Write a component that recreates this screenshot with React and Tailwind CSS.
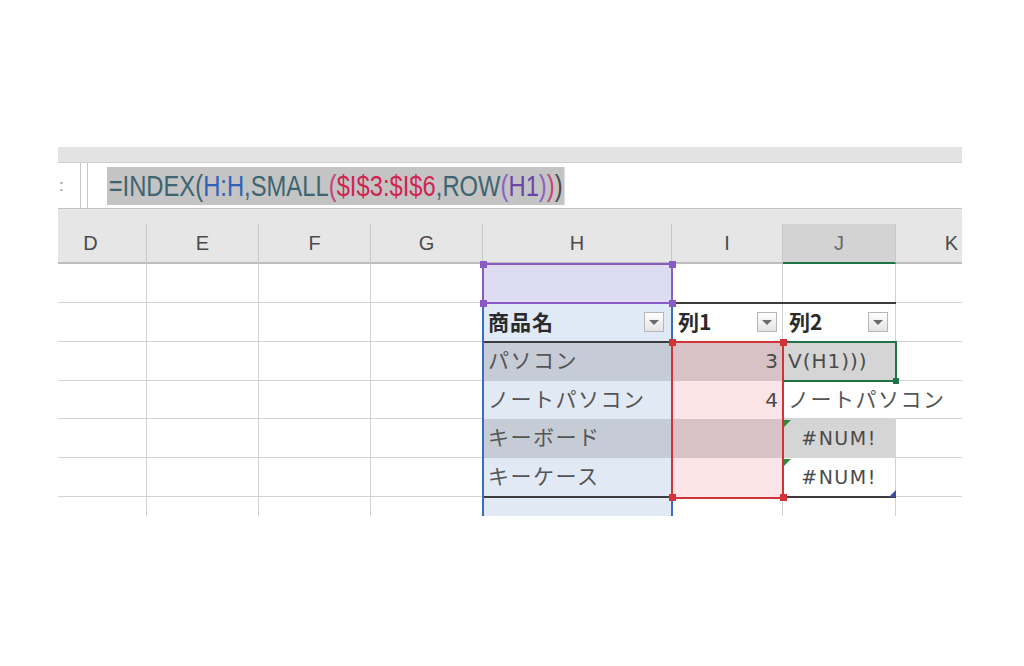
import React from 'react';

const JP = "font-['Noto_Sans_CJK_JP','Noto_Sans_CJK_SC',sans-serif]";
const LAT = "font-['DejaVu_Sans','Liberation_Sans',sans-serif]";

const ROW_H = ['h-[39px]', 'h-[39px]', 'h-[39px]', 'h-[38px]', 'h-[39px]', 'h-[39px]', 'h-[19px]'];

const HEADERS = [
  { label: 'D', w: 'w-[112px]', cls: 'bg-[#e6e6e6] border-b-[#bdbdbd] text-[#4a4a4a]' },
  { label: 'E', w: 'w-[112px]', cls: 'bg-[#e6e6e6] border-b-[#bdbdbd] text-[#4a4a4a]' },
  { label: 'F', w: 'w-[112px]', cls: 'bg-[#e6e6e6] border-b-[#bdbdbd] text-[#4a4a4a]' },
  { label: 'G', w: 'w-[112px]', cls: 'bg-[#e6e6e6] border-b-[#bdbdbd] text-[#4a4a4a]' },
  { label: 'H', w: 'w-[189px]', cls: 'bg-[#e6e6e6] border-b-[#bdbdbd] text-[#4a4a4a]' },
  { label: 'I', w: 'w-[111px]', cls: 'bg-[#e6e6e6] border-b-[#bdbdbd] text-[#4a4a4a]' },
  { label: 'J', w: 'w-[113px]', cls: 'bg-[#d3d3d3] border-b-[#217346] text-[#6a6a6a]' },
  { label: 'K', w: 'w-[112px]', cls: 'bg-[#e6e6e6] border-b-[#bdbdbd] text-[#4a4a4a]' },
];

// H column: label, background
const H_CELLS = [
  { text: '', bg: 'bg-[#dedcf3]' },
  { text: '商品名', bg: 'bg-[#e0e9f6]', bold: true },
  { text: 'パソコン', bg: 'bg-[#c6ccd5]' },
  { text: 'ノートパソコン', bg: 'bg-[#e1e9f5]' },
  { text: 'キーボード', bg: 'bg-[#c6ccd5]' },
  { text: 'キーケース', bg: 'bg-[#e1e9f5]' },
  { text: '', bg: 'bg-[#e1e9f5]' },
];

const I_CELLS = [
  { text: '', bg: '' },
  { text: '列1', bg: 'bg-white', bold: true },
  { text: '3', bg: 'bg-[#d9c2c5]' },
  { text: '4', bg: 'bg-[#fce4e7]' },
  { text: '', bg: 'bg-[#d9c2c5]' },
  { text: '', bg: 'bg-[#fce4e7]' },
  { text: '', bg: '' },
];

function Grid({ w, h, last, className = '', children }) {
  return (
    <div
      className={`${w} ${h} shrink-0 border-r ${last ? 'border-b-0' : 'border-b'} ${className}`}
    >
      {children}
    </div>
  );
}

function FilterButton() {
  return (
    <div className="w-[20px] h-[20px] shrink-0 border border-[#b7b7b7] bg-gradient-to-b from-white to-[#e4e4e4] flex items-center justify-center">
      <div className="w-0 h-0 border-l-[5px] border-r-[5px] border-t-[5px] border-l-transparent border-r-transparent border-t-[#6b6b6b]" />
    </div>
  );
}

function Handle({ pos, color }) {
  return <div className={`absolute w-[7px] h-[7px] ${pos} ${color}`} />;
}

function Formula() {
  return (
    <span className="bg-[#c4c4c4] h-[38px] px-[2px] flex items-center text-[29px] leading-[38px] font-['Liberation_Sans',sans-serif] whitespace-nowrap scale-x-[0.82] origin-left">
      <span className="text-[#3d6470]">=INDEX(</span>
      <span className="text-[#2f62b8]">H:H</span>
      <span className="text-[#3d6470]">,SMALL</span>
      <span className="text-[#c4437a]">(</span>
      <span className="text-[#cf2552]">$I$3:$I$6</span>
      <span className="text-[#3d6470]">,ROW</span>
      <span className="text-[#8a62c0]">(</span>
      <span className="text-[#6c45a8]">H1</span>
      <span className="text-[#8a62c0]">)</span>
      <span className="text-[#c4437a]">)</span>
      <span className="text-[#4a4a4a]">)</span>
    </span>
  );
}

function HCell({ r }) {
  const c = H_CELLS[r];
  const last = r === ROW_H.length - 1;
  return (
    <Grid
      w="w-[189px]"
      h={ROW_H[r]}
      last={last}
      className={`${c.bg} border-transparent flex items-center pl-[5px] pr-[7px] ${JP} text-[21px] tracking-[1.5px] text-[#555555]`}
    >
      <span className={c.bold ? 'font-bold text-[#2a2a2a] tracking-[1px]' : 'pb-[2px]'}>{c.text}</span>
      {c.bold && (
        <div className="ml-auto">
          <FilterButton />
        </div>
      )}
    </Grid>
  );
}

function ICell({ r }) {
  const c = I_CELLS[r];
  const last = r === ROW_H.length - 1;
  const filled = c.bg && c.bg !== 'bg-white';
  if (r === 1) {
    return (
      <Grid w="w-[111px]" h={ROW_H[r]} className={`bg-white border-[#d2d2d2] flex items-center pl-[6px] pr-[5px] ${JP} text-[21px] text-[#2a2a2a]`}>
        <span className="font-bold">{c.text}</span>
        <div className="ml-auto">
          <FilterButton />
        </div>
      </Grid>
    );
  }
  return (
    <Grid
      w="w-[111px]"
      h={ROW_H[r]}
      last={last}
      className={`${c.bg} ${filled ? 'border-transparent' : 'border-[#d2d2d2]'} flex items-center justify-end pr-[4px] ${LAT} text-[20px] text-[#4a4a4a]`}
    >
      {c.text}
    </Grid>
  );
}

function JCell({ r }) {
  const last = r === ROW_H.length - 1;
  const h = ROW_H[r];
  if (r === 1) {
    return (
      <Grid w="w-[113px]" h={h} className={`bg-white border-[#d2d2d2] flex items-center pl-[6px] pr-[7px] ${JP} text-[21px] text-[#2a2a2a]`}>
        <span className="font-bold">列2</span>
        <div className="ml-auto">
          <FilterButton />
        </div>
      </Grid>
    );
  }
  if (r === 2) {
    return (
      <Grid w="w-[113px]" h={h} className={`bg-[#d5d5d5] border-transparent flex items-center pl-[5px] ${LAT} text-[20px] tracking-[1px] text-[#4a4a4a] whitespace-nowrap`}>
        V(H1)))
      </Grid>
    );
  }
  if (r === 3) {
    return (
      <Grid w="w-[113px]" h={h} className={`border-b-[#d2d2d2] border-r-transparent flex items-center pl-[5px] ${JP} text-[21px] tracking-[1.5px] text-[#555555] whitespace-nowrap overflow-visible`}>
        <span className="pb-[2px]">ノートパソコン</span>
      </Grid>
    );
  }
  if (r === 4 || r === 5) {
    return (
      <Grid
        w="w-[113px]"
        h={h}
        className={`${r === 4 ? 'bg-[#d5d5d5] border-transparent' : 'bg-white border-[#d2d2d2]'} flex items-center justify-center ${LAT} text-[19px] tracking-[1.5px] text-[#4a4a4a]`}
      >
        #NUM!
      </Grid>
    );
  }
  return <Grid w="w-[113px]" h={h} last={last} className="border-[#d2d2d2]" />;
}

function Row({ r }) {
  const last = r === ROW_H.length - 1;
  const h = ROW_H[r];
  return (
    <div className="flex">
      <Grid w="w-[112px]" h={h} last={last} className="bg-white border-[#d2d2d2]" />
      <Grid w="w-[112px]" h={h} last={last} className="bg-white border-[#d2d2d2]" />
      <Grid w="w-[112px]" h={h} last={last} className="bg-white border-[#d2d2d2]" />
      <Grid w="w-[112px]" h={h} last={last} className="bg-white border-[#d2d2d2]" />
      <HCell r={r} />
      <ICell r={r} />
      <JCell r={r} />
      <Grid w="w-[112px]" h={h} last={last} className="border-[#d2d2d2]" />
    </div>
  );
}

export default function App() {
  return (
    <div className="w-[1024px] h-[666px] bg-white overflow-hidden pt-[147px] pl-[58px]">
      <div className="w-[904px] overflow-hidden">
        {/* ribbon edge */}
        <div className="h-[16px] bg-[#e3e3e3] border-b border-[#cfcfcf]" />

        {/* formula bar */}
        <div className="flex h-[46px] bg-white border-b border-[#c3c3c3]">
          <div className="w-[23px] border-r border-[#c8c8c8] flex items-center pl-[1px] text-[17px] text-[#8c8c8c] font-['Liberation_Sans',sans-serif]">
            :
          </div>
          <div className="w-[6px]" />
          <div className="flex-1 border-l border-[#c8c8c8] flex items-center pl-[19px]">
            <Formula />
          </div>
        </div>

        {/* column headers */}
        <div className="h-[55px] bg-[#e6e6e6] flex items-end">
          <div className="flex ml-[-23px]">
            {HEADERS.map((c) => (
              <div
                key={c.label}
                className={`${c.w} ${c.cls} h-[40px] shrink-0 border-r border-r-[#c8c8c8] border-b-2 flex items-center justify-center text-[20px] font-['Liberation_Sans',sans-serif]`}
              >
                {c.label}
              </div>
            ))}
          </div>
        </div>

        {/* cells */}
        <div className="relative ml-[-23px]">
          {ROW_H.map((_, r) => (
            <Row key={r} r={r} />
          ))}

          {/* table borders */}
          <div className="absolute left-[638px] top-[38px] w-[223px] h-[2px] bg-[#3c3c3c]" />
          <div className="absolute left-[449px] top-[77px] w-[187px] h-[2px] bg-[#3c3c3c]" />
          <div className="absolute left-[449px] top-[232px] w-[187px] h-[2px] bg-[#3c3c3c]" />
          <div className="absolute left-[749px] top-[232px] w-[112px] h-[2px] bg-[#3c3c3c]" />

          {/* blue reference H:H */}
          <div className="absolute left-[447px] top-[39px] w-[2px] h-[215px] bg-[#3b6cc3]" />
          <div className="absolute left-[636px] top-[39px] w-[2px] h-[215px] bg-[#3b6cc3]" />

          {/* purple reference H1 */}
          <div className="absolute left-[447px] top-[-1px] w-[191px] h-[41px] border-2 border-[#8a5ac6]" />
          <Handle pos="left-[445px] top-[-3px]" color="bg-[#8a5ac6]" />
          <Handle pos="left-[634px] top-[-3px]" color="bg-[#8a5ac6]" />
          <Handle pos="left-[445px] top-[36px]" color="bg-[#8a5ac6]" />
          <Handle pos="left-[634px] top-[36px]" color="bg-[#8a5ac6]" />

          {/* active cell J3 */}
          <div className="absolute left-[747px] top-[77px] w-[115px] h-[41px] border-2 border-[#217346]" />
          <div className="absolute left-[858px] top-[114px] w-[6px] h-[6px] bg-[#217346]" />

          {/* red reference I3:I6 */}
          <div className="absolute left-[636px] top-[77px] w-[113px] h-[158px] border-2 border-[#d13438]" />
          <Handle pos="left-[634px] top-[75px]" color="bg-[#d13438]" />
          <Handle pos="left-[745px] top-[75px]" color="bg-[#d13438]" />
          <Handle pos="left-[634px] top-[230px]" color="bg-[#d13438]" />
          <Handle pos="left-[745px] top-[230px]" color="bg-[#d13438]" />

          {/* error indicators */}
          <div className="absolute left-[749px] top-[156px] w-0 h-0 border-t-[7px] border-r-[7px] border-t-[#2e8b3e] border-r-transparent" />
          <div className="absolute left-[749px] top-[195px] w-0 h-0 border-t-[7px] border-r-[7px] border-t-[#2e8b3e] border-r-transparent" />

          {/* table resize handle */}
          <div className="absolute left-[854px] top-[226px] w-0 h-0 border-b-[7px] border-l-[7px] border-b-[#3c4ea0] border-l-transparent" />
        </div>
      </div>
    </div>
  );
}
